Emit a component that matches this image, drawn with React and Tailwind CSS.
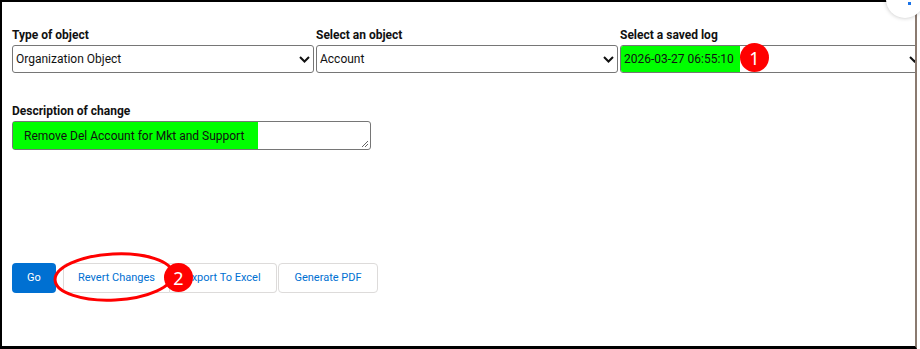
import React from "react";

function Chevron() {
  return (
    <svg width="11" height="7" viewBox="0 0 11 7" className="shrink-0">
      <path d="M1 1 L5.5 5.5 L10 1" fill="none" stroke="#111" strokeWidth="2" />
    </svg>
  );
}

function FakeSelect({ children, green }) {
  return (
    <div className="h-[28px] border border-[#767676] rounded-[3px] flex items-center justify-between bg-white overflow-hidden whitespace-nowrap">
      {green ? (
        <div className="h-full bg-[#00ff00] flex items-center pl-[3px] w-[119px] text-[#111]">{children}</div>
      ) : (
        <div className="pl-[3px] text-[#111]">{children}</div>
      )}
      <div className="pr-[3px]">
        <Chevron />
      </div>
    </div>
  );
}

function Field({ label, children }) {
  return (
    <div className="flex flex-col">
      <div className="font-bold text-[12px] text-[#111] leading-[15px] mb-[2px] whitespace-nowrap">{label}</div>
      {children}
    </div>
  );
}

function Badge({ n, left, top }) {
  return (
    <div
      className="absolute w-[29px] h-[29px] rounded-full bg-[#ff0000] text-white flex items-center justify-center text-[18px] leading-none"
      style={{ left, top, fontFamily: '"Noto Sans", sans-serif' }}
    >
      {n}
    </div>
  );
}

export default function App() {
  return (
    <div
      className="relative w-[920px] h-[349px] bg-white overflow-hidden"
      style={{ fontFamily: 'Roboto, "Noto Sans", sans-serif' }}
    >
      <div className="w-[917px] h-[349px] border-l-2 border-t-2 border-b-[3px] border-r-2 border-l-black border-t-black border-b-black border-r-[#8a7a70] overflow-hidden">
        <div className="pl-[10px] pt-[26px] text-[12px]">
          <div className="grid grid-cols-[302px_302px_304px] gap-x-[2px]">
            <Field label="Type of object">
              <FakeSelect>Organization Object</FakeSelect>
            </Field>
            <Field label="Select an object">
              <FakeSelect>Account</FakeSelect>
            </Field>
            <Field label="Select a saved log">
              <FakeSelect green>2026-03-27 06:55:10</FakeSelect>
            </Field>
          </div>

          <div className="mt-[31px] w-[359px]">
            <div className="font-bold text-[12px] text-[#111] leading-[15px] mb-[2px] whitespace-nowrap">Description of change</div>
            <div className="relative h-[29px] border border-[#767676] rounded-[3px] bg-white">
              <div className="h-full w-[245px] bg-[#00ff00] flex items-center pl-[11px] text-[#111] whitespace-nowrap">
                Remove Del Account for Mkt and Support
              </div>
              <svg width="8" height="8" viewBox="0 0 8 8" className="absolute right-[1px] bottom-[1px]">
                <path d="M7 1 L1 7 M7 4 L4 7" stroke="#666" strokeWidth="1" />
              </svg>
            </div>
          </div>

          <div className="mt-[113px] flex items-center text-[11px] whitespace-nowrap">
            <div className="h-[30px] w-[44px] rounded-[4px] bg-[#0070d2] text-white flex items-center justify-center">
              Go
            </div>
            <div className="ml-[7px] h-[30px] w-[107px] rounded-l-[4px] border border-[#dddbda] text-[#0070d2] flex items-center justify-center">
              Revert Changes
            </div>
            <div className="h-[30px] w-[107px] rounded-r-[4px] border border-l-0 border-[#dddbda] text-[#0070d2] flex items-center justify-center">
              Export To Excel
            </div>
            <div className="ml-[1px] h-[30px] w-[100px] rounded-[4px] border border-[#dddbda] text-[#0070d2] flex items-center justify-center">
              Generate PDF
            </div>
          </div>
        </div>
      </div>

      {/* close button peeking at top-right */}
      <div className="absolute left-[886px] top-[-20px] w-[38px] h-[38px] rounded-full bg-white shadow-[0_0_4px_rgba(0,0,0,0.25)]">
        <div className="absolute left-[22px] top-[22px] w-[3px] h-[3px] bg-[#1a73e8]" />
      </div>

      {/* annotations */}
      <svg className="absolute left-0 top-0 pointer-events-none" width="920" height="349">
        <ellipse cx="114" cy="277" rx="59" ry="23" fill="none" stroke="#ff0000" strokeWidth="3" transform="rotate(-3 114 277)" />
      </svg>
      <Badge n="1" left={740} top={43} />
      <Badge n="2" left={164} top={263} />
    </div>
  );
}
